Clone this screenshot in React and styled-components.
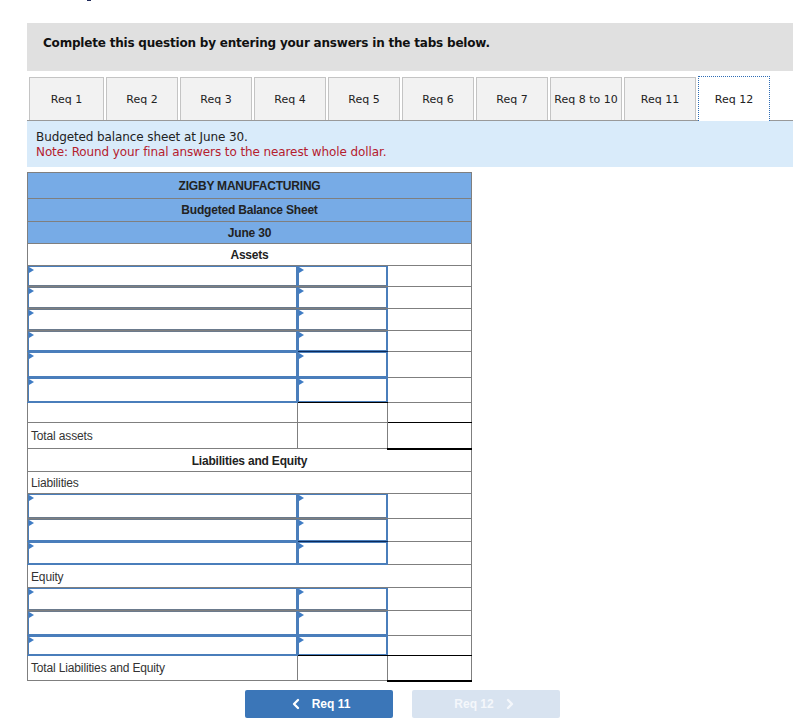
import React from 'react';
import styled, { createGlobalStyle } from 'styled-components';
import { ChevronLeft, ChevronRight } from 'lucide-react';

const GlobalStyle = createGlobalStyle`
  html, body {
    margin: 0;
    padding: 0;
    background: #fff;
  }
`;

const Page = styled.div`
  position: relative;
  width: 811px;
  height: 727px;
  box-sizing: border-box;
  padding: 23px 18px 0 27px;
  overflow: hidden;
  color: #1f1f1f;
`;

// clipped descender left over from the text above the crop
const ClippedMark = styled.span`
  position: absolute;
  top: 0;
  left: 87px;
  width: 4px;
  height: 1px;
  background: #1f2a5a;
`;

const Banner = styled.div`
  height: 48px;
  box-sizing: border-box;
  padding: 12px 16px;
  background: #e0e0e0;
  font: bold 12px/16px "DejaVu Sans", Verdana, sans-serif;
  letter-spacing: -0.2px;
  color: #111;
`;

const TabBar = styled.div`
  display: flex;
  gap: 2px;
  height: 44px;
  box-sizing: border-box;
  margin-top: 6px;
  padding-left: 2px;
  border-bottom: 1px solid #999;
`;

const Tab = styled.div`
  width: ${p => p.$width || 72}px;
  height: 43px;
  box-sizing: border-box;
  display: flex;
  align-items: center;
  justify-content: center;
  font: 11px "DejaVu Sans", Verdana, sans-serif;
  color: #222;
  background: ${p => (p.$active ? '#fff' : '#f2f2f2')};
  border: 1px solid #c4c4c4;
  border-bottom: none;
  ${p => p.$active && `
    height: 45px;
    margin-top: -1px;
    z-index: 1;
    border: 1px dotted #2f6db5;
    border-bottom: none;
  `}
`;

const Prompt = styled.div`
  height: 46px;
  box-sizing: border-box;
  padding: 9px 9px;
  background: #d9ebfa;
  font: 12px/14px "DejaVu Sans", Verdana, sans-serif;
  letter-spacing: -0.1px;
  color: #222;
`;

const Note = styled.div`
  margin-top: 1px;
  color: #b5202e;
`;

const Sheet = styled.table`
  width: 444px;
  margin-top: 5px;
  table-layout: fixed;
  border-collapse: collapse;
  font: 12px "Liberation Sans", Arial, sans-serif;
  letter-spacing: -0.15px;
  color: #333;
`;

const Row = styled.tr`
  height: ${p => p.$h}px;
`;

const Cell = styled.td`
  position: relative;
  padding: ${p => (p.$drop ? '2px' : '0')} 3px 0;
  border: 1px solid #7f7f7f;
  ${p => p.$bottomRule && `border-bottom: ${p.$bottomRule}px solid #000;`}
`;

const TitleCell = styled.td`
  padding: ${p => (p.$drop ? '2px' : '0')} 0 0;
  text-align: center;
  font-weight: bold;
  letter-spacing: -0.2px;
  color: #222;
  border: 1px solid #7f7f7f;
  background: ${p => (p.$blue ? '#77abe6' : '#fff')};
`;

/* collapsed borders paint over the field, so the grid line itself has to be blue;
   where two borders tie, the cell above or to the left wins */
const InputCell = styled.td`
  position: relative;
  padding: 0;
  border: 1px solid #4a7ebb;
  ${p => p.$first && 'border-left-color: #7f7f7f;'}
  ${p => p.$seamBelow && 'border-bottom-color: #7f7f7f;'}
  ${p => p.$ruleBelow && `border-bottom-color: ${p.$ruleBelow};`}
  &::before {
    content: '';
    position: absolute;
    z-index: 1;
    top: 1px;
    left: 1px;
    border-left: 5px solid #3f7cc4;
    border-top: 3px solid transparent;
    border-bottom: 3px solid transparent;
  }
`;

const Field = styled.input`
  position: absolute;
  inset: 0;
  display: block;
  width: 100%;
  height: 100%;
  box-sizing: border-box;
  margin: 0;
  padding: 0;
  background: transparent;
  border: 1px solid #4a7ebb;
  border-top-color: ${p => (p.$seamAbove ? '#6b7a8c' : '#4a7ebb')};
  border-bottom-color: ${p => (p.$seamBelow ? '#6b7a8c' : '#4a7ebb')};
  border-radius: 0;
  outline: none;
`;

const Footer = styled.div`
  display: flex;
  gap: 19px;
  margin-top: 8px;
  padding-left: 218px;
`;

const PageButton = styled.button`
  width: 148px;
  height: 28px;
  display: flex;
  align-items: center;
  justify-content: center;
  gap: 8px;
  padding: 0;
  border: none;
  border-radius: 2px;
  background: ${p => (p.disabled ? '#d8e3f0' : '#3b76b8')};
  color: ${p => (p.disabled ? '#f4f7fb' : '#fff')};
  font: bold 12px "Liberation Sans", Arial, sans-serif;
`;

const tabs = ['Req 1', 'Req 2', 'Req 3', 'Req 4', 'Req 5', 'Req 6', 'Req 7', 'Req 8 to 10', 'Req 11', 'Req 12'];

const InputRow = ({ h, ruleBelow, totalBelow, seamAbove, seamBelow }) => (
  <Row $h={h}>
    <InputCell $first $seamBelow={seamBelow}>
      <Field $seamAbove={seamAbove} $seamBelow={seamBelow} />
    </InputCell>
    <InputCell $seamBelow={seamBelow} $ruleBelow={ruleBelow}>
      <Field $seamAbove={seamAbove} $seamBelow={seamBelow} />
    </InputCell>
    <Cell $bottomRule={totalBelow ? 1 : 0} />
  </Row>
);

const App = () => (
  <Page>
    <GlobalStyle />
    <ClippedMark />
    <Banner>Complete this question by entering your answers in the tabs below.</Banner>
    <TabBar>
      {tabs.map((t, i) => (
        <Tab key={t} $width={i === 0 ? 75 : 72} $active={t === 'Req 12'}>{t}</Tab>
      ))}
    </TabBar>
    <Prompt>
      Budgeted balance sheet at June 30.
      <Note>Note: Round your final answers to the nearest whole dollar.</Note>
    </Prompt>
    <Sheet>
      <colgroup>
        <col style={{ width: 270 }} />
        <col style={{ width: 90 }} />
        <col style={{ width: 84 }} />
      </colgroup>
      <tbody>
        <Row $h={26}><TitleCell colSpan={3} $blue>ZIGBY MANUFACTURING</TitleCell></Row>
        <Row $h={23}><TitleCell colSpan={3} $blue>Budgeted Balance Sheet</TitleCell></Row>
        <Row $h={22}><TitleCell colSpan={3} $blue>June 30</TitleCell></Row>
        <Row $h={22}><TitleCell colSpan={3}>Assets</TitleCell></Row>
        <InputRow h={21} seamBelow />
        <InputRow h={22} seamAbove seamBelow />
        <InputRow h={22} seamAbove seamBelow />
        <InputRow h={21} seamAbove ruleBelow="#0b2a5a" />
        <InputRow h={26} />
        <InputRow h={25} ruleBelow="#000" />
        <Row $h={20}>
          <Cell />
          <Cell />
          <Cell $bottomRule={1} />
        </Row>
        <Row $h={26}>
          <Cell>Total assets</Cell>
          <Cell />
          <Cell $bottomRule={2} />
        </Row>
        <Row $h={23}><TitleCell colSpan={3} $drop>Liabilities and Equity</TitleCell></Row>
        <Row $h={22}><Cell colSpan={3}>Liabilities</Cell></Row>
        <InputRow h={25} seamBelow />
        <InputRow h={23} seamAbove ruleBelow="#0b2a5a" />
        <InputRow h={23} />
        <Row $h={23}><Cell colSpan={3} $drop>Equity</Cell></Row>
        <InputRow h={23} seamBelow />
        <InputRow h={25} seamAbove />
        <InputRow h={20} ruleBelow="#000" totalBelow />
        <Row $h={25}>
          <Cell>Total Liabilities and Equity</Cell>
          <Cell />
          <Cell $bottomRule={2} />
        </Row>
      </tbody>
    </Sheet>
    <Footer>
      <PageButton type="button"><ChevronLeft size={16} strokeWidth={3.5} /> Req 11</PageButton>
      <PageButton type="button" disabled>Req 12 <ChevronRight size={16} strokeWidth={3.5} /></PageButton>
    </Footer>
  </Page>
);

export default App;
